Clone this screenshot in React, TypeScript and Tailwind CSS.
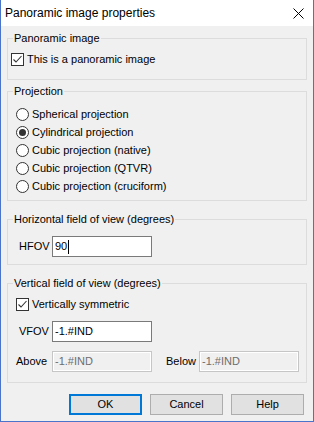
const FONT = "font-['Liberation_Sans',Arial,sans-serif]";

function Check({ checked }: { checked: boolean }) {
  return (
    <span className="flex h-[13px] w-[13px] shrink-0 items-center justify-center border border-[#333333] bg-white">
      {checked && (
        <svg width="11" height="11" viewBox="0 0 11 11">
          <path d="M1.5 5.5 L4 8 L9.5 2" fill="none" stroke="#333333" strokeWidth="1.1" />
        </svg>
      )}
    </span>
  );
}

function Radio({ checked, label }: { checked?: boolean; label: string }) {
  return (
    <div className="flex h-[18px] items-center">
      <span className="ml-[8px] flex h-[13px] w-[13px] items-center justify-center rounded-full border border-[#333333] bg-white">
        {checked && <span className="h-[7px] w-[7px] rounded-full bg-[#333333]" />}
      </span>
      <span className="ml-[3px]">{label}</span>
    </div>
  );
}

function Group({
  title,
  className,
  children,
}: {
  title: string;
  className: string;
  children: React.ReactNode;
}) {
  return (
    <fieldset className={`border border-[#dcdcdc] ${className}`}>
      <legend className="ml-[5px] px-[1px] leading-[13px]">{title}</legend>
      {children}
    </fieldset>
  );
}

function Field({
  value,
  disabled,
  caret,
  className = "",
}: {
  value: string;
  disabled?: boolean;
  caret?: boolean;
  className?: string;
}) {
  return (
    <div
      className={`flex h-[21px] w-[100px] items-center px-[2px] ${
        disabled
          ? "border border-[#c6c6c6] bg-[#f0f0f0] text-[#6d6d6d] shadow-[inset_0_0_0_1px_#ffffff]"
          : "border border-[#7a7a7a] bg-white text-black"
      } ${className}`}
    >
      <span>{value}</span>
      {caret && <span className="ml-[1px] h-[14px] w-px bg-black" />}
    </div>
  );
}

function Button({ label, primary }: { label: string; primary?: boolean }) {
  return (
    <div
      className={`flex h-[21px] w-[73px] items-center justify-center bg-[#e1e1e1] ${
        primary ? "border-2 border-[#0078d7]" : "border border-[#adadad]"
      }`}
    >
      {label}
    </div>
  );
}

export default function App() {
  return (
    <div
      className={`flex h-[422px] w-[314px] flex-col border-x border-b border-[#4a74c9] text-[11px] text-black ${FONT}`}
    >
      <div className="flex h-[26px] shrink-0 items-center justify-between bg-white pl-[4px] pr-[9px]">
        <span className="text-[12px]">Panoramic image properties</span>
        <svg width="11" height="11" viewBox="0 0 11 11">
          <path d="M0.5 0.5 L10.5 10.5 M10.5 0.5 L0.5 10.5" stroke="#000" strokeWidth="1" />
        </svg>
      </div>

      <div className="flex flex-1 flex-col bg-[#f0f0f0] px-[6px]">
        <Group title="Panoramic image" className="mt-[6px] pb-[13px] pt-[8px]">
          <div className="ml-[3px] flex h-[13px] items-center gap-[3px]">
            <Check checked />
            <span>This is a panoramic image</span>
          </div>
        </Group>

        <Group title="Projection" className="mt-[5px] pb-[5px] pt-[7px]">
          <Radio label="Spherical projection" />
          <Radio label="Cylindrical projection" checked />
          <Radio label="Cubic projection (native)" />
          <Radio label="Cubic projection (QTVR)" />
          <Radio label="Cubic projection (cruciform)" />
        </Group>

        <Group title="Horizontal field of view (degrees)" className="mt-[12px] pb-[7px] pt-[10px]">
          <div className="flex items-center">
            <span className="w-[44px] pl-[11px]">HFOV</span>
            <Field value="90" caret />
          </div>
        </Group>

        <Group title="Vertical field of view (degrees)" className="mt-[12px] pb-[10px] pt-[8px]">
          <div className="ml-[8px] flex h-[13px] items-center gap-[3px]">
            <Check checked />
            <span>Vertically symmetric</span>
          </div>
          <div className="mt-[10px] flex items-center">
            <span className="w-[44px] pl-[11px]">VFOV</span>
            <Field value="-1.#IND" />
          </div>
          <div className="mt-[9px] flex items-center">
            <span className="w-[44px] pl-[8px]">Above</span>
            <Field value="-1.#IND" disabled />
            <span className="ml-[14px] w-[33px]">Below</span>
            <Field value="-1.#IND" disabled className="w-[99px]" />
          </div>
        </Group>

        <div className="mr-[3px] mt-[11px] flex justify-end gap-[8px]">
          <Button label="OK" primary />
          <Button label="Cancel" />
          <Button label="Help" />
        </div>
      </div>
    </div>
  );
}
